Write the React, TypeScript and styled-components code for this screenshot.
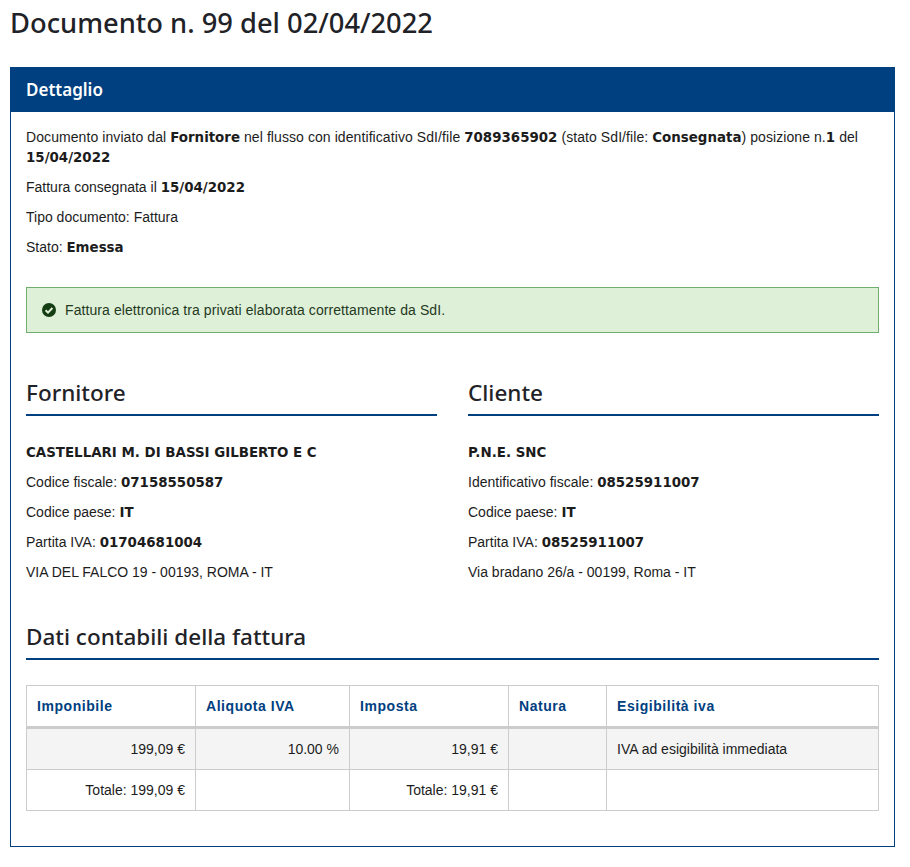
import { createGlobalStyle, styled } from "styled-components";

const GlobalStyle = createGlobalStyle`
  html, body {
    margin: 0;
    padding: 0;
    background: #fff;
    color: #1c1c1c;
    font-family: "Liberation Sans", Arial, sans-serif;
    font-size: 14px;
    line-height: 20px;
  }
`;

const Page = styled.div`
  padding: 0 15px 19px 10px;
`;

const Title = styled.h1`
  margin: 0;
  padding-top: 5px;
  height: 67px;
  box-sizing: border-box;
  font-family: "Noto Sans", sans-serif;
  font-size: 27.3px;
  font-weight: 500;
  line-height: 36px;
  color: #1f2328;
`;

const Panel = styled.section`
  border: 1px solid #004080;
  border-top: 0;
`;

const PanelHeader = styled.h2`
  margin: 0 -1px;
  padding: 0 16px;
  height: 45px;
  background: #004080;
  color: #fff;
  font-family: "Noto Sans", sans-serif;
  font-size: 17px;
  font-weight: 600;
  line-height: 45px;
`;

const PanelBody = styled.div`
  padding: 15px 15px 35px;
`;

const Line = styled.p`
  margin: 0 0 10px;
`;

const Prose = styled(Line)`
  letter-spacing: 0.08px;
`;

const Strong = styled.b`
  font-family: "DejaVu Sans", sans-serif;
  font-size: 13.4px;
  font-weight: 700;
  line-height: 1;
  letter-spacing: 0;
`;

const Alert = styled.div`
  display: flex;
  align-items: center;
  gap: 9px;
  height: 46px;
  box-sizing: border-box;
  margin-top: 30px;
  padding: 0 15px;
  background: #dff0d8;
  border: 1px solid #6fae6f;
  color: #1f3a1f;
  letter-spacing: 0.08px;
`;

const Parties = styled.div`
  display: grid;
  grid-template-columns: 411px 411px;
  column-gap: 31px;
  margin-top: 45px;
`;

const SectionTitle = styled.h3<{ $gap: number }>`
  margin: 0 0 ${(p) => p.$gap}px;
  height: 38px;
  box-sizing: border-box;
  border-bottom: 2px solid #004080;
  font-family: "Noto Sans", sans-serif;
  font-size: 22.5px;
  font-weight: 500;
  line-height: 30px;
  color: #1f2328;
`;

const Accounting = styled.div`
  margin-top: 30px;
`;

const Table = styled.table`
  width: 852px;
  border-collapse: collapse;
  table-layout: fixed;
`;

const HeadCell = styled.th<{ $width: number }>`
  box-sizing: border-box;
  width: ${(p) => p.$width}px;
  height: 42px;
  padding: 0 10px;
  border: 1px solid #ccc;
  border-bottom: 3px solid #ccc;
  color: #004080;
  font-weight: 700;
  letter-spacing: 0.55px;
  text-align: left;
`;

const Cell = styled.td<{ $right?: boolean }>`
  height: 40px;
  padding: 0 10px;
  border: 1px solid #ccc;
  text-align: ${(p) => (p.$right ? "right" : "left")};
`;

const Row = styled.tr<{ $shaded?: boolean }>`
  background: ${(p) => (p.$shaded ? "#f4f4f4" : "#fff")};
`;

const CheckIcon = () => (
  <svg width="14" height="14" viewBox="0 0 14 14" aria-hidden="true">
    <circle cx="7" cy="7" r="7" fill="#143d14" />
    <path d="M3.6 7.2 6 9.6l4.4-4.6" fill="none" stroke="#dff0d8" strokeWidth="2" />
  </svg>
);

export default function App() {
  return (
    <Page>
      <GlobalStyle />
      <Title>Documento n. 99 del 02/04/2022</Title>
      <Panel>
        <PanelHeader>Dettaglio</PanelHeader>
        <PanelBody>
          <Prose>
            Documento inviato dal <Strong>Fornitore</Strong> nel flusso con identificativo SdI/file <Strong>7089365902</Strong> (stato SdI/file: <Strong>Consegnata</Strong>) posizione n.<Strong>1</Strong> del <Strong>15/04/2022</Strong>
          </Prose>
          <Line>
            Fattura consegnata il <Strong>15/04/2022</Strong>
          </Line>
          <Line>Tipo documento: Fattura</Line>
          <Line>
            Stato: <Strong>Emessa</Strong>
          </Line>
          <Alert>
            <CheckIcon />
            Fattura elettronica tra privati elaborata correttamente da SdI.
          </Alert>
          <Parties>
            <div>
              <SectionTitle $gap={26}>Fornitore</SectionTitle>
              <Line>
                <Strong>CASTELLARI M. DI BASSI GILBERTO E C</Strong>
              </Line>
              <Line>
                Codice fiscale: <Strong>07158550587</Strong>
              </Line>
              <Line>
                Codice paese: <Strong>IT</Strong>
              </Line>
              <Line>
                Partita IVA: <Strong>01704681004</Strong>
              </Line>
              <Line>VIA DEL FALCO 19 - 00193, ROMA - IT</Line>
            </div>
            <div>
              <SectionTitle $gap={26}>Cliente</SectionTitle>
              <Line>
                <Strong>P.N.E. SNC</Strong>
              </Line>
              <Line>
                Identificativo fiscale: <Strong>08525911007</Strong>
              </Line>
              <Line>
                Codice paese: <Strong>IT</Strong>
              </Line>
              <Line>
                Partita IVA: <Strong>08525911007</Strong>
              </Line>
              <Line>Via bradano 26/a - 00199, Roma - IT</Line>
            </div>
          </Parties>
          <Accounting>
            <SectionTitle $gap={25}>Dati contabili della fattura</SectionTitle>
            <Table>
              <thead>
                <tr>
                  <HeadCell $width={169}>Imponibile</HeadCell>
                  <HeadCell $width={154}>Aliquota IVA</HeadCell>
                  <HeadCell $width={159}>Imposta</HeadCell>
                  <HeadCell $width={98}>Natura</HeadCell>
                  <HeadCell $width={272}>Esigibilità iva</HeadCell>
                </tr>
              </thead>
              <tbody>
                <Row $shaded>
                  <Cell $right>199,09 €</Cell>
                  <Cell $right>10.00 %</Cell>
                  <Cell $right>19,91 €</Cell>
                  <Cell />
                  <Cell>IVA ad esigibilità immediata</Cell>
                </Row>
                <Row>
                  <Cell $right>Totale: 199,09 €</Cell>
                  <Cell />
                  <Cell $right>Totale: 19,91 €</Cell>
                  <Cell />
                  <Cell />
                </Row>
              </tbody>
            </Table>
          </Accounting>
        </PanelBody>
      </Panel>
    </Page>
  );
}
